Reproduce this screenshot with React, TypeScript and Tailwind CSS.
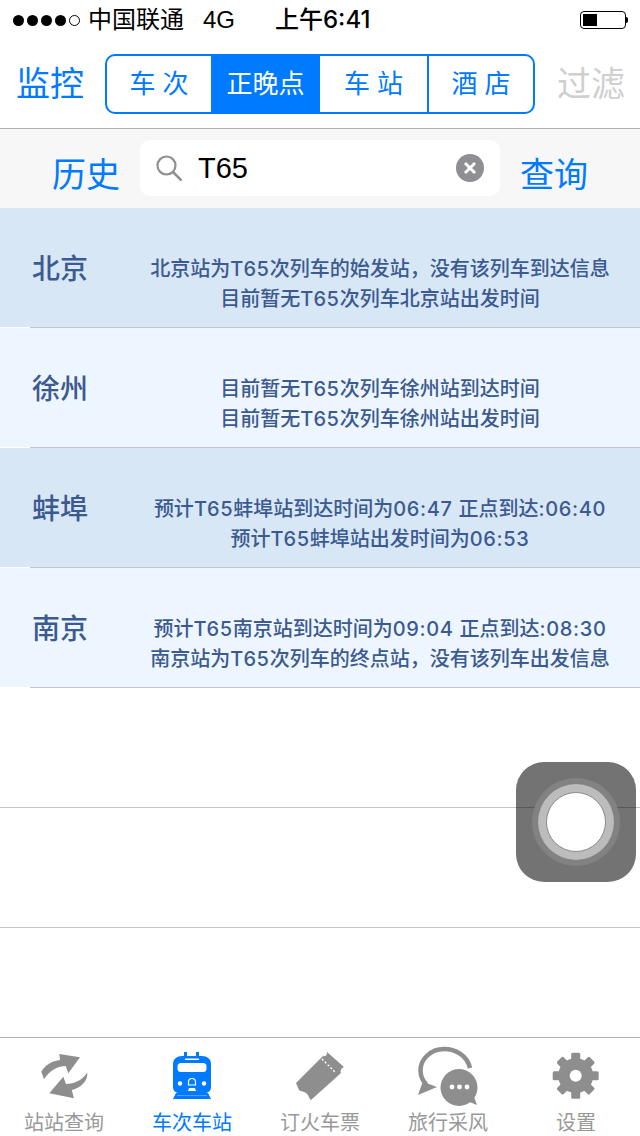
const stations = [
  {
    city: "北京",
    lines: ["北京站为T65次列车的始发站，没有该列车到达信息", "目前暂无T65次列车北京站出发时间"],
    bg: "bg-[#d7e7f5]",
  },
  {
    city: "徐州",
    lines: ["目前暂无T65次列车徐州站到达时间", "目前暂无T65次列车徐州站出发时间"],
    bg: "bg-[#edf6fe]",
  },
  {
    city: "蚌埠",
    lines: ["预计T65蚌埠站到达时间为06:47 正点到达:06:40", "预计T65蚌埠站出发时间为06:53"],
    bg: "bg-[#d7e7f5]",
  },
  {
    city: "南京",
    lines: ["预计T65南京站到达时间为09:04 正点到达:08:30", "南京站为T65次列车的终点站，没有该列车出发信息"],
    bg: "bg-[#edf6fe]",
  },
];

function RefreshIcon() {
  return (
    <svg viewBox="0 0 128 60" className="h-[60px] w-[128px]" fill="#8e8e8e">
      <path d="M41.3 25.7C45 19 52 15 60 14L59.3 8L80 11.3L68.3 27.3L65.7 20C58 20 50 24 44 33.3Z" />
      <path d="M87.3 26.3C88 35 81 42 71.7 44L74 52.3L49.3 47.3L63.3 30.7L66 38C73 38 78 35 80 34C83 32 86 29 87.3 26.3Z" />
    </svg>
  );
}

function TrainIcon() {
  return (
    <svg viewBox="0 0 128 60" className="h-[60px] w-[128px]">
      <path d="M56 6h3v5h-3zM68 6h3v5h-3z" fill="#007aff" />
      <path
        d="M54 10h20c5 0 9 3 9 8v23c0 4-3 6-7 6H52c-4 0-7-2-7-6V18c0-5 4-8 9-8z"
        fill="#007aff"
      />
      <path d="M48 47h32l3 6H45z" fill="#007aff" />
      <rect x="49.5" y="17" width="29" height="9" rx="3.5" fill="#fff" />
      <rect x="57" y="12.5" width="14" height="1.5" fill="#fff" />
      <circle cx="52" cy="37.5" r="2.2" fill="#fff" />
      <circle cx="76" cy="37.5" r="2.2" fill="#fff" />
      <path d="M60.5 36a3.5 3.5 0 0 1 7 0v3h-7z" fill="none" stroke="#fff" strokeWidth="1.2" />
      <path d="M61 42h6l1 3h-8z" fill="#fff" />
      <path d="M49 49.5h30" stroke="#4d9fff" strokeWidth="1" />
    </svg>
  );
}

function TicketIcon() {
  return (
    <svg viewBox="0 0 128 60" className="h-[60px] w-[128px]" fill="#8e8e8e">
      <path d="M40 37L67 10C69 11 71 10 71 6L88 21C85 22 84 25 85 27L55 54C53 53 53 49 50 47C48 45 45 46 43 44Z" />
      <path d="M66 13L79 26" stroke="#fff" strokeWidth="1.4" strokeDasharray="2 2" fill="none" />
    </svg>
  );
}

function ChatIcon() {
  return (
    <svg viewBox="0 0 128 60" className="h-[60px] w-[128px]">
      <path
        d="M86 22C83 9 71 3 60 3C46 3 36.5 14 36.5 24C36.5 31 39 35 42 38"
        fill="none"
        stroke="#8e8e8e"
        strokeWidth="4.5"
      />
      <path d="M39 35L34 49L53 41L45 38z" fill="#8e8e8e" />
      <circle cx="75" cy="41.5" r="18.5" fill="#8e8e8e" />
      <path d="M83 55L93 59L89 48z" fill="#8e8e8e" />
      <circle cx="68" cy="41" r="2.4" fill="#fff" />
      <circle cx="75.5" cy="41" r="2.4" fill="#fff" />
      <circle cx="83" cy="41" r="2.4" fill="#fff" />
    </svg>
  );
}

function GearIcon() {
  const teeth = [0, 45, 90, 135, 180, 225, 270, 315];
  return (
    <svg viewBox="0 0 128 60" className="h-[60px] w-[128px]" fill="#8e8e8e">
      {teeth.map((a) => (
        <rect key={a} x="59.2" y="6.7" width="9" height="10" rx="1.5" transform={`rotate(${a} 63.7 29.7)`} />
      ))}
      <circle cx="63.7" cy="29.7" r="17.5" />
      <circle cx="63.7" cy="29.7" r="6" fill="#fff" />
    </svg>
  );
}

const tabs = [
  { label: "站站查询", icon: <RefreshIcon /> },
  { label: "车次车站", icon: <TrainIcon />, active: true },
  { label: "订火车票", icon: <TicketIcon /> },
  { label: "旅行采风", icon: <ChatIcon /> },
  { label: "设置", icon: <GearIcon /> },
];

function StatusBar() {
  return (
    <div className="flex h-10 items-center text-[24px] text-black">
      <div className="ml-[13px] flex gap-[3px]">
        {[0, 1, 2, 3].map((i) => (
          <span key={i} className="h-[11px] w-[11px] rounded-full bg-black" />
        ))}
        <span className="h-[11px] w-[11px] rounded-full border border-black" />
      </div>
      <span className="ml-2 w-[115px]">中国联通</span>
      <span className="w-[72px]">4G</span>
      <span className="font-['Inter','Noto_Sans_CJK_SC',sans-serif] font-medium">上午6:41</span>
      <div className="ml-auto mr-3 flex items-center">
        <div className="flex h-[18px] w-[46px] rounded-[4px] border border-black p-[2px]">
          <div className="w-[14px] bg-black" />
        </div>
        <div className="h-[6px] w-[2px] rounded-r-sm bg-black" />
      </div>
    </div>
  );
}

function NavBar() {
  const segClass = "flex h-full items-center justify-center text-[26px] leading-none";
  return (
    <div className="flex h-[89px] items-center border-b border-[#b2b2b2]">
      <span className="ml-4 text-[34px] leading-none text-[#007aff]">监控</span>
      <div className="ml-[21px] flex h-[60px] w-[430px] overflow-hidden rounded-[10px] border-2 border-[#007aff] text-[#007aff]">
        <div className={`${segClass} w-[104px] whitespace-pre`}>车 次</div>
        <div className={`${segClass} w-[109px] bg-[#007aff] text-white`}>正晚点</div>
        <div className={`${segClass} w-[109px] whitespace-pre border-r-2 border-[#007aff]`}>车 站</div>
        <div className={`${segClass} flex-1 whitespace-pre`}>酒 店</div>
      </div>
      <span className="ml-[22px] text-[34px] leading-none text-[#cfcfcf]">过滤</span>
    </div>
  );
}

function SearchBar() {
  return (
    <div className="flex h-[79px] items-start bg-[#f7f7f7] pt-[11px]">
      <span className="ml-[52px] mt-[18px] text-[34px] leading-none text-[#007aff]">历史</span>
      <div className="ml-5 flex h-14 w-[360px] items-center rounded-[10px] bg-white pl-4">
        <svg viewBox="0 0 26 26" className="h-[26px] w-[26px]" fill="none" stroke="#8e8e93" strokeWidth="2.2">
          <circle cx="10.5" cy="10.5" r="9" />
          <path d="M17 17L25.5 25.5" strokeWidth="2.6" />
        </svg>
        <span className="ml-4 text-[29px] leading-none text-black">T65</span>
        <div className="ml-auto mr-[16px] flex h-7 w-7 items-center justify-center rounded-full bg-[#8e8e93]">
          <svg viewBox="0 0 14 14" className="h-[14px] w-[14px]" stroke="#fff" strokeWidth="3">
            <path d="M2 2L12 12M12 2L2 12" />
          </svg>
        </div>
      </div>
      <span className="ml-5 mt-[18px] text-[34px] leading-none text-[#007aff]">查询</span>
    </div>
  );
}

// latin runs in the reference sit wider than the font gives
function InfoLine({ text }: { text: string }) {
  return (
    <div>
      {text.split(/([A-Za-z0-9: ]+)/).map((part, i) =>
        i % 2 === 1 ? (
          <span key={i} className="tracking-[0.65px]">
            {part}
          </span>
        ) : (
          part
        ),
      )}
    </div>
  );
}

function StationRow({ city, lines, bg }: { city: string; lines: string[]; bg: string }) {
  return (
    <div className="h-[120px]">
      <div className={`${bg} flex h-[119px] pt-[46px] text-[#3c5a90]`}>
        <div className="mt-[1px] w-[120px] pl-[32px] text-[28px] font-medium leading-[30px]">{city}</div>
        <div className="flex-1 text-center font-['Inter','Noto_Sans_CJK_SC',sans-serif] text-[20px] font-medium leading-[30px]">
          {lines.map((l) => (
            <InfoLine key={l} text={l} />
          ))}
        </div>
      </div>
      <div className="ml-[30px] h-px bg-[#c4c6cb]" />
    </div>
  );
}

function TabBar() {
  return (
    <div className="flex h-[99px] border-t border-[#b2b2b2]">
      {tabs.map((t) => (
        <div key={t.label} className="flex w-[128px] flex-col items-center pt-2">
          {t.icon}
          <span className={`mt-[5px] text-[20px] leading-[24px] ${t.active ? "text-[#007aff]" : "text-[#999999]"}`}>
            {t.label}
          </span>
        </div>
      ))}
    </div>
  );
}

export default function App() {
  return (
    <div className="relative flex h-[1136px] w-[640px] flex-col overflow-hidden bg-white font-['Liberation_Sans','Noto_Sans_CJK_SC',sans-serif]">
      <StatusBar />
      <NavBar />
      <SearchBar />
      {stations.map((s) => (
        <StationRow key={s.city} {...s} />
      ))}
      <div className="h-[120px] border-b border-[#c4c6cb]" />
      <div className="h-[120px] border-b border-[#c4c6cb]" />
      <div className="flex-1" />
      <TabBar />

      {/* assistive touch button */}
      <div className="absolute left-[516px] top-[762px] flex h-[120px] w-[120px] items-center justify-center rounded-[28px] bg-black/55">
        <div className="flex h-[88px] w-[88px] items-center justify-center rounded-full bg-[#828282]">
          <div className="flex h-[76px] w-[76px] items-center justify-center rounded-full bg-[#bcbcbc]">
            <div className="h-[60px] w-[60px] rounded-full border border-[#8a8a8a] bg-white" />
          </div>
        </div>
      </div>
    </div>
  );
}
